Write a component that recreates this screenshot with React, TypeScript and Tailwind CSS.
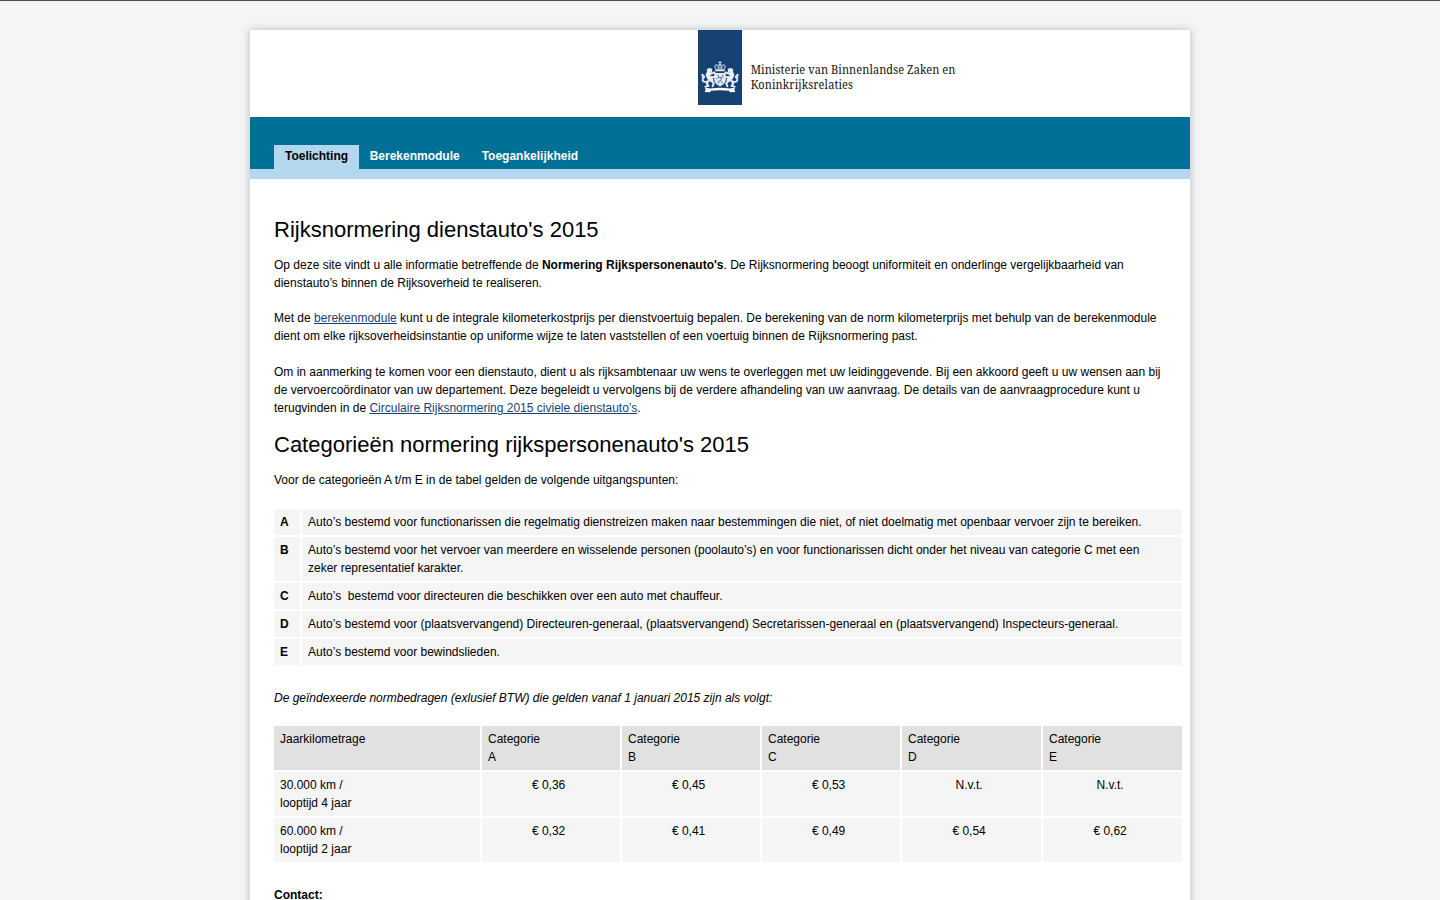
import type { ReactNode } from 'react';

const categories = [
  ['A', 'Auto’s bestemd voor functionarissen die regelmatig dienstreizen maken naar bestemmingen die niet, of niet doelmatig met openbaar vervoer zijn te bereiken.'],
  ['B', 'Auto’s bestemd voor het vervoer van meerdere en wisselende personen (poolauto’s) en voor functionarissen dicht onder het niveau van categorie C met een zeker representatief karakter.'],
  ['C', 'Auto’s \u00a0bestemd voor directeuren die beschikken over een auto met chauffeur.'],
  ['D', 'Auto’s bestemd voor (plaatsvervangend) Directeuren-generaal, (plaatsvervangend) Secretarissen-generaal en (plaatsvervangend) Inspecteurs-generaal.'],
  ['E', 'Auto’s bestemd voor bewindslieden.'],
];

const rates = [
  { km: '30.000 km /', term: 'looptijd 4 jaar', values: ['€ 0,36', '€ 0,45', '€ 0,53', 'N.v.t.', 'N.v.t.'] },
  { km: '60.000 km /', term: 'looptijd 2 jaar', values: ['€ 0,32', '€ 0,41', '€ 0,49', '€ 0,54', '€ 0,62'] },
];

function Lion() {
  return (
    <g fill="none" stroke="#e9eef5" strokeLinecap="round" strokeLinejoin="round">
      <path d="M13.600 39.400l-2-.8-2.200 1 .2 2.400 2.400.8 1.600-1.200z" fill="#e9eef5" strokeWidth="1.200" />
      <path d="M11.200 42.600c-1.600 1.600-1.400 3.400-.4 4.800l2.600 2.600" strokeWidth="4.200" />
      <path d="M12 44.200l4.600-1.800M12.400 47l4 .2" strokeWidth="1.800" />
      <path d="M13 50.200l2.800 3.200-1.200 2.800M10.800 50.200l-2 3.200 1.600 2.400-3 .8" strokeWidth="2" />
      <path d="M8.800 51.600c-3.600 1-5.200-1.200-3.600-3.200 1.600-1.800 1-3-1.200-3.800M4.200 47l2 .4" strokeWidth="1.700" />
    </g>
  );
}

function Logo() {
  return (
    <svg className="block" width="270" height="75" viewBox="0 0 270 75" role="img" aria-label="Rijksoverheid">
      <rect width="44" height="75" fill="#154273" />
      <g fill="none" stroke="#dfe6ef" strokeLinecap="round">
        <path d="M18 40.300h8" strokeWidth="1.900" />
        <path d="M17.800 38.800c-2.400-3.200-.2-4.800 2-3.600M26.200 38.800c2.400-3.200.2-4.800-2-3.600M20.200 38.600c-.6-2.800.4-4.200 1.800-4.400 1.400.2 2.400 1.600 1.800 4.400M22 34.200v4.400" strokeWidth="1" />
        <path d="M22 31.400v2.400M21 32.400h2" strokeWidth="1" />
      </g>
      <Lion />
      <g transform="translate(44 0) scale(-1 1)"><Lion /></g>
      <path d="M16.200 43h11.600v6.600c0 3.200-2.400 5.200-5.800 6.800-3.400-1.600-5.800-3.600-5.800-6.800z" fill="#e3e9f1" />
      <g stroke="#154273" strokeWidth=".9" fill="none" opacity=".75">
        <path d="M19.200 45.200l1.600.8-.6 1.800 3.400-.4-1 3.400-3 .6M24.800 44.800v2l-1.200 1M23 51.400l2 1.600M18 48.400l1.200.6M20 53.400l1.400-1" />
      </g>
      <path d="M6.800 57.400l5.600 1c6-1 13.200-1 19.200 0l5.600-1-.8 2.400 1 2.200-5.200.2-1.400-1.400c-5.600-.8-12-.8-17.600 0l-1.400 1.400-5.200-.2 1-2.200z" fill="#fff" />
      <g transform="translate(52.700 0) scale(.94 1)" fontFamily="'Noto Serif', 'Liberation Serif', serif" fontSize="11.700" fill="#151515">
        <text x="0" y="44" textLength="217.800">Ministerie van Binnenlandse Zaken en</text>
        <text x="0" y="59" textLength="108.900">Koninkrijksrelaties</text>
      </g>
    </svg>
  );
}

function TextLink({ children }: { children: ReactNode }) {
  return <a href="#" className="text-[#154273] underline">{children}</a>;
}

export default function App() {
  return (
    <div className="h-[900px] overflow-hidden border-t border-[#4d4d55] bg-[#f3f5f7] pt-[29px] font-['Liberation_Sans',Arial,sans-serif] text-[12px] leading-[18px] text-black">
      <div className="mx-auto h-[1000px] w-[940px] bg-white shadow-[0_0_8px_rgba(0,0,0,0.25)]">
        <header className="h-[87px] pl-[448px]">
          <Logo />
        </header>
        <nav className="flex h-[62px] items-end border-b-[10px] border-[#b2d7ee] bg-[#007096] pl-6 font-bold text-white">
          <a href="#" className="h-6 w-[84.67px] bg-[#b2d7ee] pt-0.5 pl-[11px] text-black">Toelichting</a>
          <a href="#" className="h-6 w-28 pt-0.5 pl-[11px]">Berekenmodule</a>
          <a href="#" className="h-6 pt-0.5 pl-[11px]">Toegankelijkheid</a>
        </nav>
        <main className="w-[932px] pt-[38px] pl-6">
          <h1 className="text-[22px] leading-[26px]">Rijksnormering dienstauto's 2015</h1>
          <p className="mt-[13px] w-[892px]">
            Op deze site vindt u alle informatie betreffende de <b>Normering Rijkspersonenauto's</b>. De Rijksnormering beoogt uniformiteit en onderlinge vergelijkbaarheid van dienstauto’s binnen de Rijksoverheid te realiseren.
          </p>
          <p className="mt-[17px] w-[892px]">
            Met de <TextLink>berekenmodule</TextLink> kunt u de integrale kilometerkostprijs per dienstvoertuig bepalen. De berekening van de norm kilometerprijs met behulp van de berekenmodule dient om elke rijksoverheidsinstantie op uniforme wijze te laten vaststellen of een voertuig binnen de Rijksnormering past.
          </p>
          <p className="mt-[18px] w-[892px]">
            Om in aanmerking te komen voor een dienstauto, dient u als rijksambtenaar uw wens te overleggen met uw leidinggevende. Bij een akkoord geeft u uw wensen aan bij de vervoercoördinator van uw departement. Deze begeleidt u vervolgens bij de verdere afhandeling van uw aanvraag. De details van de aanvraagprocedure kunt u terugvinden in de <TextLink>Circulaire Rijksnormering 2015 civiele dienstauto’s</TextLink>.
          </p>
          <h2 className="mt-[15px] text-[22px] leading-[26px]">Categorieën normering rijkspersonenauto's 2015</h2>
          <p className="mt-[13px]">Voor de categorieën A t/m E in de tabel gelden de volgende uitgangspunten:</p>
          <div className="mt-5 grid grid-cols-[26px_880px] gap-0.5">
            {categories.map(([letter, text]) => (
              <div key={letter} className="contents">
                <div className="bg-[#f5f5f5] px-1.5 py-1 font-bold">{letter}</div>
                <div className="bg-[#f5f5f5] py-1 pr-6 pl-1.5">{text}</div>
              </div>
            ))}
          </div>
          <p className="mt-6 italic">De geïndexeerde normbedragen (exlusief BTW) die gelden vanaf 1 januari 2015 zijn als volgt:</p>
          <div className="mt-[19px] grid grid-cols-[206px_138px_138px_138px_139px_139px] gap-0.5">
            <div className="bg-[#e1e1e1] px-1.5 py-1">Jaarkilometrage</div>
            {categories.map(([letter]) => (
              <div key={letter} className="bg-[#e1e1e1] px-1.5 py-1">Categorie<br />{letter}</div>
            ))}
            {rates.map((rate) => (
              <div key={rate.km} className="contents">
                <div className="bg-[#f5f5f5] px-1.5 py-1">{rate.km}<br />{rate.term}</div>
                {rate.values.map((value, i) => (
                  <div key={i} className="bg-[#f5f5f5] py-1 pr-[10.8px] pl-1.5 text-center">{value}</div>
                ))}
              </div>
            ))}
          </div>
          <p className="mt-6 font-bold">Contact:</p>
        </main>
      </div>
    </div>
  );
}
